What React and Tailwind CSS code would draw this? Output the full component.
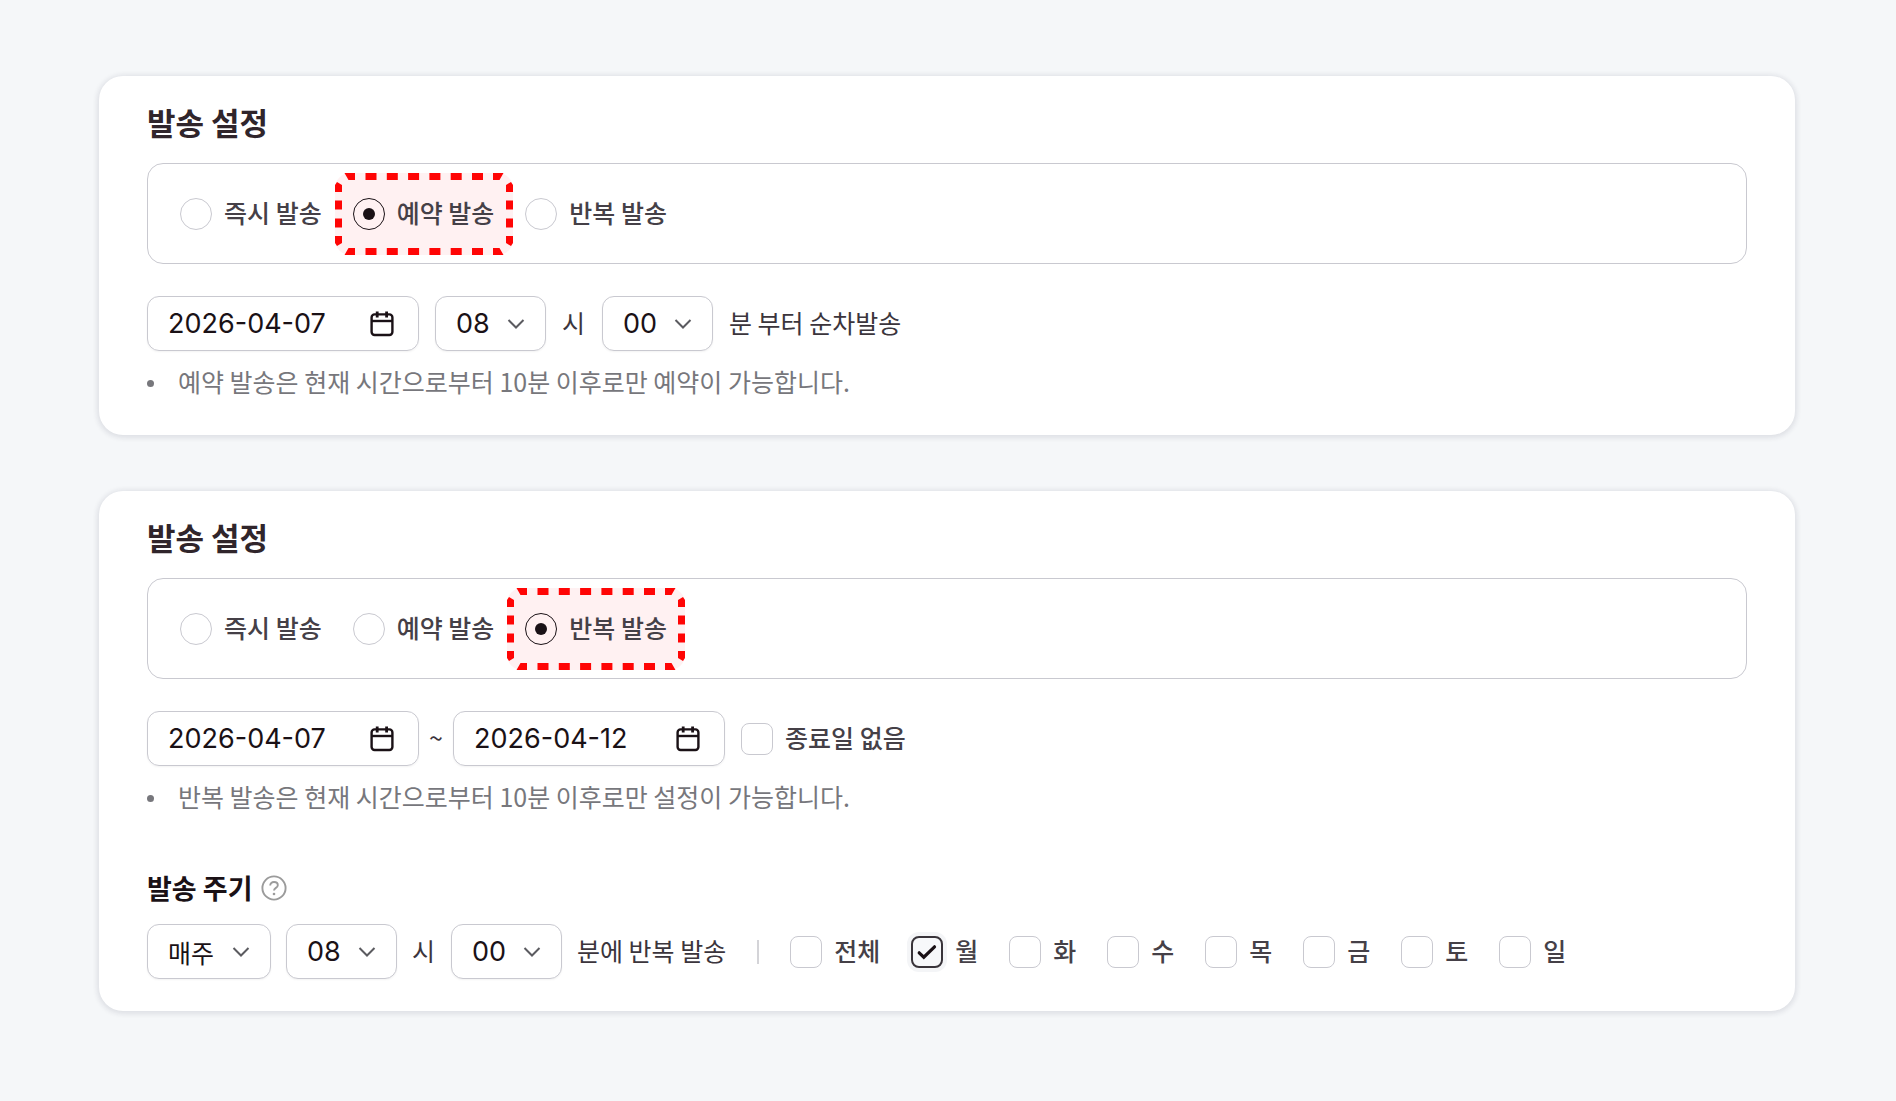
import React, { useState } from "react";

const WEEK_DAYS = ["월", "화", "수", "목", "금", "토", "일"];

const CalendarIcon = () => (
  <svg
    width="28"
    height="28"
    viewBox="0 0 28 28"
    fill="none"
    stroke="#1a1116"
    strokeWidth="2.4"
    aria-hidden="true"
  >
    <rect x="3.6" y="4.4" width="20.8" height="20.6" rx="3" />
    <path d="M3.6 11h20.8" />
    <path d="M9.2 1.4v6M18.6 1.4v6" strokeWidth="2.8" />
  </svg>
);

const ChevronIcon = () => (
  <svg
    className="pointer-events-none col-start-1 row-start-1 mr-[21px] justify-self-end"
    width="18"
    height="12"
    viewBox="0 0 18 12"
    fill="none"
    stroke="#5b5b60"
    strokeWidth="2"
    aria-hidden="true"
  >
    <path d="M1.5 2l7.5 7.5L16.5 2" />
  </svg>
);

const HelpIcon = () => (
  <svg
    width="26"
    height="26"
    viewBox="0 0 26 26"
    fill="none"
    stroke="#9b9b9b"
    strokeWidth="1.9"
    aria-hidden="true"
  >
    <circle cx="13" cy="13" r="11.6" />
    <path d="M9.2 10.4c0-2 1.6-3.4 3.8-3.4s3.8 1.3 3.8 3.2c0 2.8-3.8 2.6-3.8 5.4" />
    <circle cx="13" cy="19" r="1.3" fill="#9b9b9b" stroke="none" />
  </svg>
);

// Red dashed frame around the option being explained
const Highlight = () => (
  <svg
    className="pointer-events-none absolute -left-[18px] top-1/2 -translate-y-1/2"
    width="178"
    height="82"
    viewBox="0 0 178 82"
    fill="none"
    aria-hidden="true"
  >
    <rect width="178" height="82" rx="15" fill="#fff1f2" />
    <g stroke="#ff0505" strokeWidth="7">
      <path d="M30.5 3.5H157M30.5 78.5H157" strokeDasharray="11 10.3" />
      <path d="M3.5 27.5V58M174.5 27.5V58" strokeDasharray="9 9" />
    </g>
    <g fill="#ff0505">
      <path d="M20 0H9.5L13.5 7H20ZM0 19V12L2 9L7 12V19Z" />
      <path d="M158 0H168.5L164.5 7H158ZM178 19V12L176 9L171 12V19Z" />
      <path d="M20 82H9.5L13.5 75H20ZM0 63V70L2 73L7 70V63Z" />
      <path d="M158 82H168.5L164.5 75H158ZM178 63V70L176 73L171 70V63Z" />
    </g>
  </svg>
);

const SendTypeGroup = ({ name, initial }) => {
  const [value, setValue] = useState(initial);

  return (
    <div
      role="radiogroup"
      aria-label="발송 설정"
      className="flex h-[101px] items-center gap-[31px] rounded-2xl border border-[#c9c9d0] px-8"
    >
      {["즉시 발송", "예약 발송", "반복 발송"].map((option) => (
        <label key={option} className="relative flex items-center gap-3">
          {option === initial && <Highlight />}
          <input
            type="radio"
            name={name}
            value={option}
            checked={value === option}
            onChange={() => setValue(option)}
            className="relative grid size-8 appearance-none place-content-center rounded-full border border-[#c9c9d0] before:size-3 before:rounded-full checked:border-[#1a1116] checked:before:bg-[#1a1116]"
          />
          <span className="relative pb-1 font-medium text-[#454047]">{option}</span>
        </label>
      ))}
    </div>
  );
};

const DateField = ({ label, defaultValue }) => (
  <div className="flex h-[55px] w-[272px] items-center rounded-xl border border-[#c9c9d0] pl-5 pr-[22px] shadow-xs">
    <input
      type="text"
      aria-label={label}
      defaultValue={defaultValue}
      className="w-full min-w-0 flex-1 font-[Inter,sans-serif] text-[27px] text-[#1a1116] outline-none"
    />
    <button type="button" aria-label={`${label} 선택`}>
      <CalendarIcon />
    </button>
  </div>
);

const SelectField = ({ label, options, className }) => (
  <div className={`grid items-center ${className}`}>
    <select
      aria-label={label}
      className="col-start-1 row-start-1 h-[55px] w-full appearance-none rounded-xl border border-[#c9c9d0] bg-white pl-5 text-[#1a1116] shadow-xs"
    >
      {options.map((option) => (
        <option key={option}>{option}</option>
      ))}
    </select>
    <ChevronIcon />
  </div>
);

const TimeFields = () => (
  <>
    <SelectField
      label="시"
      options={["08", "09", "10"]}
      className="w-[111px] font-[Inter,sans-serif] text-[27px]"
    />
    <span className="w-6 pb-1">시</span>
    <SelectField
      label="분"
      options={["00", "10", "20"]}
      className="w-[111px] font-[Inter,sans-serif] text-[27px]"
    />
  </>
);

const CheckOption = ({ label, checked, onChange }) => (
  <label className="flex items-center gap-3 font-medium text-[#454047]">
    <span className="grid">
      <input
        type="checkbox"
        checked={checked}
        onChange={onChange}
        className="col-start-1 row-start-1 size-8 appearance-none rounded-lg border border-[#c9c9d0] bg-white checked:border-2 checked:border-[#39343a] checked:bg-[#f7f8fa] checked:ring-4 checked:ring-[#f4f5f7]"
      />
      {checked && (
        <svg
          className="pointer-events-none col-start-1 row-start-1"
          width="32"
          height="32"
          viewBox="0 0 32 32"
          fill="none"
          stroke="#1a1116"
          strokeWidth="3.2"
          strokeLinecap="round"
          aria-hidden="true"
        >
          <path d="M8.2 16.8l4.6 4.4L23.5 10.8" />
        </svg>
      )}
    </span>
    <span className="pb-1">{label}</span>
  </label>
);

const Notice = ({ children }) => (
  <ul className="mt-3 text-[#77777c]">
    <li className="flex items-center gap-6">
      <span className="size-[7px] rounded-full bg-[#77777c]" />
      <span className="pb-1">{children}</span>
    </li>
  </ul>
);

const Card = ({ children }) => (
  <section className="rounded-3xl bg-white px-12 pb-8 pt-[23px] shadow-[0_1px_5px_2px_rgba(30,30,60,0.10)]">
    <h2 className="mb-[18px] text-[31px] font-bold leading-[46px] text-[#30252b]">
      발송 설정
    </h2>
    {children}
  </section>
);

const App = () => {
  const [noEndDate, setNoEndDate] = useState(false);
  const [days, setDays] = useState(["월"]);

  const toggleDay = (day) => {
    setDays(days.includes(day) ? days.filter((d) => d !== day) : [...days, day]);
  };

  const toggleAll = () => {
    setDays(days.length === WEEK_DAYS.length ? [] : WEEK_DAYS);
  };

  return (
    <main className="flex min-h-screen flex-col gap-14 bg-[#f5f7f9] py-[76px] pl-[99px] pr-[101px] font-['Noto_Sans_CJK_KR',sans-serif] text-[25px] leading-9 text-[#3b353c]">
      <Card>
        <SendTypeGroup name="reserveType" initial="예약 발송" />
        <div className="mt-8 flex items-center gap-4">
          <DateField label="발송일" defaultValue="2026-04-07" />
          <TimeFields />
          <span className="pb-1">분 부터 순차발송</span>
        </div>
        <Notice>예약 발송은 현재 시간으로부터 10분 이후로만 예약이 가능합니다.</Notice>
      </Card>

      <Card>
        <SendTypeGroup name="repeatType" initial="반복 발송" />
        <div className="mt-8 flex items-center gap-4">
          <div className="flex items-center gap-2">
            <DateField label="시작일" defaultValue="2026-04-07" />
            <span className="w-[18px] pb-1 text-center">~</span>
            <DateField label="종료일" defaultValue="2026-04-12" />
          </div>
          <CheckOption
            label="종료일 없음"
            checked={noEndDate}
            onChange={() => setNoEndDate(!noEndDate)}
          />
        </div>
        <Notice>반복 발송은 현재 시간으로부터 10분 이후로만 설정이 가능합니다.</Notice>

        <div className="mt-[50px] flex items-center gap-2">
          <h3 className="text-[27px] font-bold leading-10 text-[#1a1116]">발송 주기</h3>
          <button type="button" aria-label="발송 주기 도움말">
            <HelpIcon />
          </button>
        </div>
        <div className="mt-4 flex items-center gap-[31px]">
          <div className="flex items-center gap-[15px]">
            <SelectField
              label="발송 주기"
              options={["매주", "매월"]}
              className="w-[124px]"
            />
            <TimeFields />
            <span className="pb-1">분에 반복 발송</span>
          </div>
          <span className="h-6 w-[2px] bg-[#d4d4d8]" />
          <div className="flex items-center gap-[31px]">
            <CheckOption
              label="전체"
              checked={days.length === WEEK_DAYS.length}
              onChange={toggleAll}
            />
            {WEEK_DAYS.map((day) => (
              <CheckOption
                key={day}
                label={day}
                checked={days.includes(day)}
                onChange={() => toggleDay(day)}
              />
            ))}
          </div>
        </div>
      </Card>
    </main>
  );
};

export default App;
